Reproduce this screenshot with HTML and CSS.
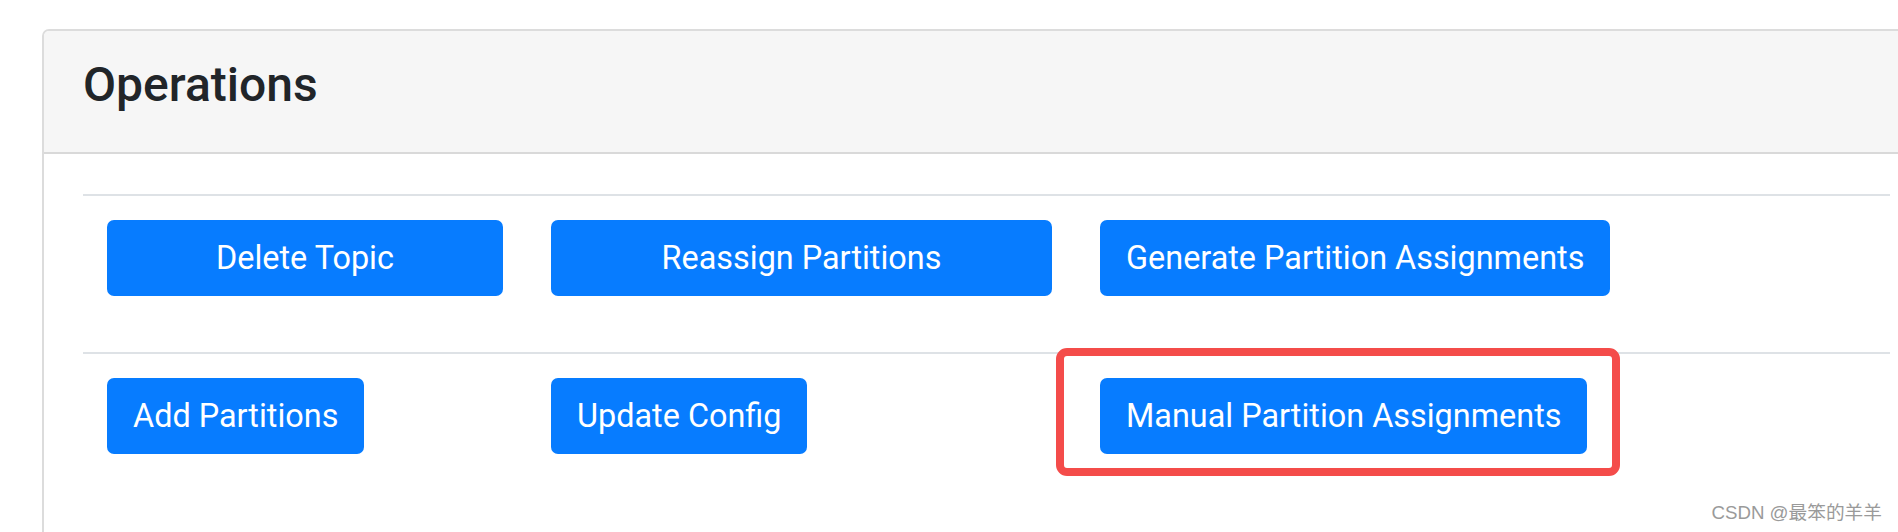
FILE: index.html
```html
<!DOCTYPE html>
<html lang="en">
<head>
<meta charset="utf-8">
<title>Operations</title>
<link rel="stylesheet" href="styles.css">
</head>
<body>
<div class="card">
  <div class="card-header">
    <h4 class="card-title">Operations</h4>
  </div>
  <div class="card-body">
    <div class="ops-row ops-row-first">
      <div class="cell"><button class="btn btn-block">Delete Topic</button></div>
      <div class="cell"><button class="btn btn-block">Reassign Partitions</button></div>
      <div class="cell"><button class="btn">Generate Partition Assignments</button></div>
      <div class="cell"></div>
    </div>
    <div class="ops-row">
      <div class="cell"><button class="btn">Add Partitions</button></div>
      <div class="cell"><button class="btn">Update Config</button></div>
      <div class="cell"><button class="btn">Manual Partition Assignments</button></div>
      <div class="cell"></div>
    </div>
  </div>
</div>
<div class="highlight-box"></div>
<div class="watermark">CSDN @最笨的羊羊</div>
</body>
</html>
```

FILE: styles.css
```css
html, body {
  margin: 0;
  padding: 0;
  overflow: hidden;
  background: #ffffff;
}

body {
  width: 1898px;
  height: 532px;
  position: relative;
  font-family: Roboto, "Liberation Sans", sans-serif;
  color: #212529;
}

.card {
  margin: 29px 0 0 42px;
  width: 1892px;
  border: 2px solid #dcdcdc;
  border-radius: 7px;
  background: #ffffff;
  box-sizing: border-box;
}

.card-header {
  background: #f6f6f6;
  border-bottom: 2px solid #d9d9d9;
  border-radius: 5px 5px 0 0;
  height: 121px;
  box-sizing: content-box;
  padding: 0 39px;
}

.card-title {
  margin: 0;
  padding-top: 25px;
  font-size: 48px;
  line-height: 58px;
  font-weight: 500;
  color: #212529;
}

.card-body {
  padding: 40px 39px 120px 39px;
}

.ops-row {
  display: grid;
  grid-template-columns: 444px 549px 558px 1fr;
  border-top: 2px solid #dee2e6;
  width: 1807px;
}

.cell {
  padding: 24px;
  display: flex;
  align-items: flex-start;
}

.ops-row-first .cell {
  padding-bottom: 56px;
}

.btn {
  height: 76px;
  padding: 0 26px;
  border: 0;
  border-radius: 7px;
  background: #077cff;
  color: #ffffff;
  font-family: Roboto, "Liberation Sans", sans-serif;
  font-size: 32.4px;
  font-weight: 400;
  line-height: 76px;
  white-space: nowrap;
  display: inline-flex;
  align-items: center;
  justify-content: center;
}

.btn-block {
  width: 100%;
}

.highlight-box {
  position: absolute;
  left: 1056px;
  top: 348px;
  width: 564px;
  height: 128px;
  box-sizing: border-box;
  border: 8px solid #f44c4a;
  border-radius: 11px;
}

.watermark {
  position: absolute;
  right: 16px;
  top: 503px;
  font-family: "Liberation Sans", "Noto Sans CJK SC", sans-serif;
  font-size: 18.7px;
  line-height: 20px;
  color: #9a9a9a;
  white-space: nowrap;
}
```
